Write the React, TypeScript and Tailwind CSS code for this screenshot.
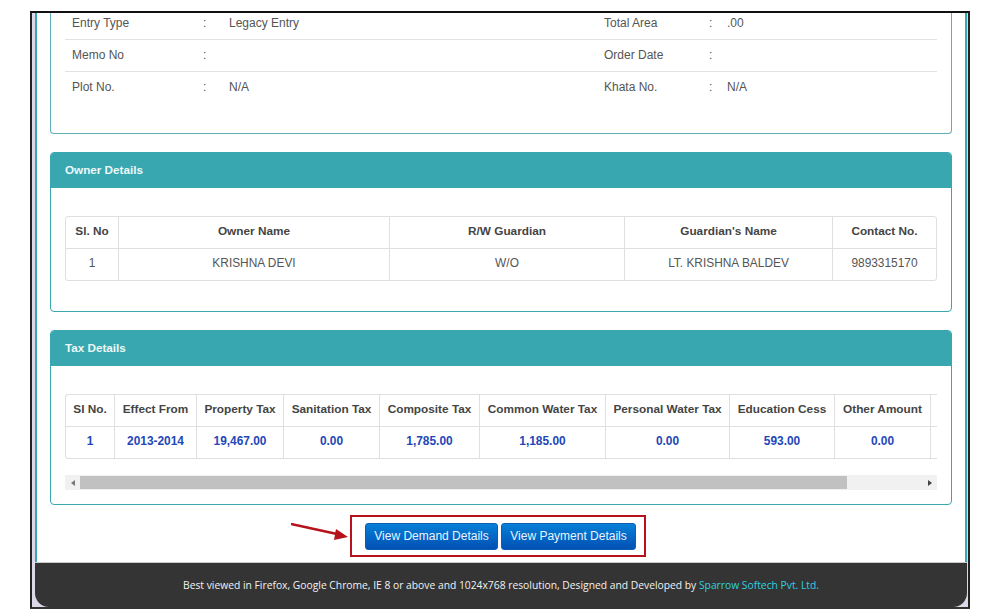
import React from "react";

const font = { fontFamily: '"Liberation Sans", Arial, sans-serif' };

const infoRows = [
  ["Entry Type", "Legacy Entry", "Total Area", ".00"],
  ["Memo No", "", "Order Date", ""],
  ["Plot No.", "N/A", "Khata No.", "N/A"],
];

const ownerCols = [
  { label: "Sl. No", value: "1", width: "w-[53px]" },
  { label: "Owner Name", value: "KRISHNA DEVI", width: "w-[271px]" },
  { label: "R/W Guardian", value: "W/O", width: "w-[235px]" },
  { label: "Guardian's Name", value: "LT. KRISHNA BALDEV", width: "w-[208px]" },
  { label: "Contact No.", value: "9893315170", width: "flex-1" },
];

const taxCols = [
  { label: "SI No.", value: "1", width: "w-[49px]" },
  { label: "Effect From", value: "2013-2014", width: "w-[82px]" },
  { label: "Property Tax", value: "19,467.00", width: "w-[87px]" },
  { label: "Sanitation Tax", value: "0.00", width: "w-[96px]" },
  { label: "Composite Tax", value: "1,785.00", width: "w-[100px]" },
  { label: "Common Water Tax", value: "1,185.00", width: "w-[126px]" },
  { label: "Personal Water Tax", value: "0.00", width: "w-[124px]" },
  { label: "Education Cess", value: "593.00", width: "w-[105px]" },
  { label: "Other Amount", value: "0.00", width: "w-[96px]" },
  { label: "", value: "", width: "flex-1" },
];

function Panel(props: { title: string; bodyClass: string; children: React.ReactNode }) {
  return (
    <section className="rounded-[4px] border border-[#38a7b0] bg-white">
      <h2 className="flex h-[35px] items-center rounded-t-[3px] bg-[#38a7b0] px-[14px] pb-[2px] text-[11.7px] font-bold text-[#eef8f8]">
        {props.title}
      </h2>
      <div className={props.bodyClass}>{props.children}</div>
    </section>
  );
}

function DataTable(props: {
  cols: { label: string; value: string; width: string }[];
  valueClass: string;
  outerClass: string;
}) {
  return (
    <div className={props.outerClass}>
      <div className="flex h-[32px] border-b border-[#dfdfdf]">
        {props.cols.map((col) => (
          <div
            key={col.label}
            className={`${col.width} flex items-center justify-center whitespace-nowrap border-r border-[#dfdfdf] pb-[1px] text-[11.8px] font-bold text-[#444] last:border-r-0`}
          >
            {col.label}
          </div>
        ))}
      </div>
      <div className="flex h-[31px]">
        {props.cols.map((col) => (
          <div
            key={col.label}
            className={`${col.width} flex items-center justify-center whitespace-nowrap border-r border-[#dfdfdf] pb-[1px] text-[11.9px] last:border-r-0 ${props.valueClass}`}
          >
            {col.value}
          </div>
        ))}
      </div>
    </div>
  );
}

export default function App() {
  return (
    <div className="h-[616px] w-[1008px] overflow-hidden bg-white pl-[30px] pt-[11px]" style={font}>
      <div className="flex h-[598px] w-[940px] flex-col overflow-hidden border-x-2 border-y-2 border-x-[#222] border-t-[#111] border-b-[#333] bg-[#dcd8e8]">
        <div className="ml-[3px] mr-[1px] flex min-h-0 flex-1 flex-col border-x-2 border-[#38a7b0] bg-white px-[13px]">
          <section className="h-[121px] shrink-0 rounded-b-[4px] border-x border-b border-[#5fb0b6]">
            <div className="-mt-[5px] px-[14px]">
              {infoRows.map((row) => (
                <div
                  key={row[0]}
                  className="flex h-[32px] items-center border-b border-[#e2e2e2] pb-[1px] text-[12px] text-[#555] last:border-b-0 last:pb-[3px]"
                >
                  <span className="w-[138px] pl-[7px]">{row[0]}</span>
                  <span className="w-[26px]">:</span>
                  <span className="w-[375px]">{row[1]}</span>
                  <span className="w-[105px]">{row[2]}</span>
                  <span className="w-[18px]">:</span>
                  <span>{row[3]}</span>
                </div>
              ))}
            </div>
          </section>

          <div className="mt-[18px]">
            <Panel title="Owner Details" bodyClass="h-[123px] px-[14px] pt-[28px]">
              <DataTable
                cols={ownerCols}
                valueClass="text-[#555]"
                outerClass="rounded-[3px] border border-[#dfdfdf]"
              />
            </Panel>
          </div>

          <div className="mt-[18px]">
            <Panel title="Tax Details" bodyClass="h-[138px] px-[14px] pt-[28px]">
              <DataTable
                cols={taxCols}
                valueClass="font-bold text-[#2347b8]"
                outerClass="overflow-hidden rounded-l-[3px] border-y border-l border-[#dfdfdf]"
              />
              <div className="mt-[16px] flex h-[15px] items-center bg-[#f1f1f1]">
                <div className="flex w-[15px] justify-center">
                  <span className="h-0 w-0 border-y-[3px] border-r-[4px] border-y-transparent border-r-[#777]" />
                </div>
                <div className="h-[13px] w-[767px] bg-[#c1c1c1]" />
                <div className="flex-1" />
                <div className="flex w-[15px] justify-center">
                  <span className="h-0 w-0 border-y-[3px] border-l-[4px] border-y-transparent border-l-[#444]" />
                </div>
              </div>
            </Panel>
          </div>

          <div className="relative mt-[10px] flex justify-center">
            <div className="mr-[6px] flex h-[42px] w-[296px] items-center justify-center gap-[3px] border-2 border-[#b5121b] pl-[5px]">
              <button className="h-[27px] w-[133px] rounded-[3px] border border-[#0a5fb4] bg-gradient-to-b from-[#0a80d8] to-[#0350b4] text-[12px] text-[#eaf4ff]">
                View Demand Details
              </button>
              <button className="h-[27px] w-[135px] rounded-[3px] border border-[#0a5fb4] bg-gradient-to-b from-[#0a80d8] to-[#0350b4] text-[12px] text-[#eaf4ff]">
                View Payment Details
              </button>
            </div>
            <svg className="absolute left-[241px] top-[7px]" width="60" height="20" viewBox="0 0 60 20">
              <path d="M0 2 L46 12" stroke="#b5121b" strokeWidth="2.6" fill="none" />
              <path d="M57 15 L45 7 L43 18 Z" fill="#b5121b" />
            </svg>
          </div>
        </div>

        <footer
          className="-mt-px ml-[3px] mr-[1px] flex h-[45px] shrink-0 items-center justify-center rounded-b-[14px] border-t border-[#cfcac8] bg-[#343434] pt-[2px] text-[10.3px] text-[#f2f2f2]"
          style={{ fontFamily: '"Open Sans", sans-serif' }}
        >
          <span>
            Best viewed in Firefox, Google Chrome, IE 8 or above and 1024x768 resolution, Designed and Developed by{" "}
            <span className="text-[#2fd0e0]">Sparrow Softech Pvt. Ltd.</span>
          </span>
        </footer>
      </div>
    </div>
  );
}
